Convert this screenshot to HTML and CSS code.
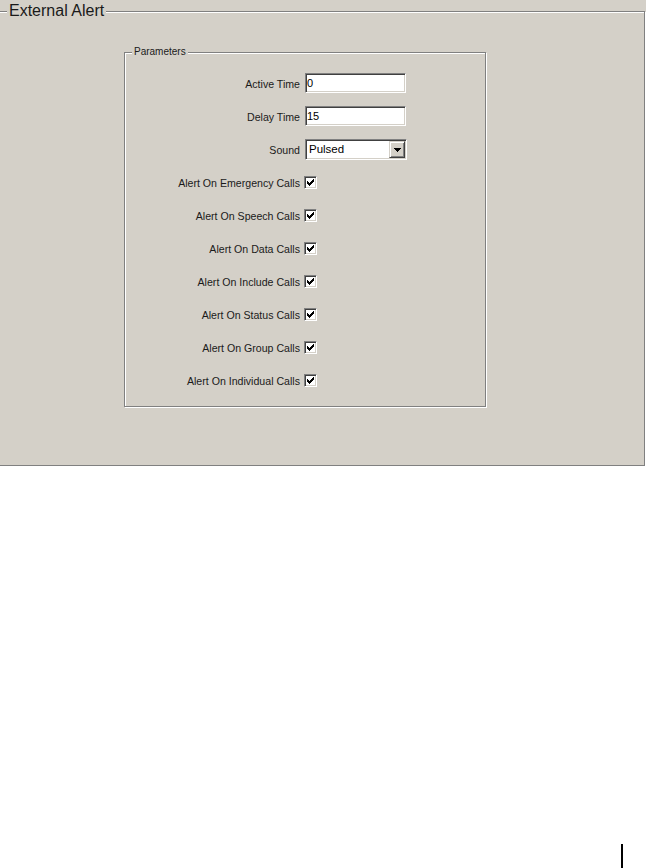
FILE: index.html
```html
<!DOCTYPE html>
<html lang="en">

<head>
    <meta charset="UTF-8">
    <meta name="viewport" content="width=device-width, initial-scale=1.0">
    <title>External Alert</title>
    <link rel="stylesheet" href="styles.css">
</head>

<body>
    <div class="panel">
        <fieldset class="group group-outer">
            <legend>External Alert</legend>

            <fieldset class="group group-params">
                <legend>Parameters</legend>

                <div class="form-grid">
                    <label for="active-time">Active Time</label>
                    <input type="text" id="active-time" value="0">

                    <label for="delay-time">Delay Time</label>
                    <input type="text" id="delay-time" value="15">

                    <label for="sound">Sound</label>
                    <div class="combo" id="sound">
                        <span class="combo-value">Pulsed</span>
                        <span class="combo-btn">
                            <svg width="7" height="4" viewBox="0 0 7 4"><path d="M0 0h7v1h-1v1h-1v1h-1v1h-1v-1h-1v-1h-1v-1h-1z" fill="#000"/></svg>
                        </span>
                    </div>

                    <label>Alert On Emergency Calls</label>
                    <span class="check"><svg width="11" height="11" viewBox="0 0 11 11"><path d="M2 4h1v3h-1zM3 5h1v3h-1zM4 6h1v3h-1zM5 5h1v3h-1zM6 4h1v3h-1zM7 3h1v3h-1zM8 2h1v3h-1z" fill="#000"/></svg></span>

                    <label>Alert On Speech Calls</label>
                    <span class="check"><svg width="11" height="11" viewBox="0 0 11 11"><path d="M2 4h1v3h-1zM3 5h1v3h-1zM4 6h1v3h-1zM5 5h1v3h-1zM6 4h1v3h-1zM7 3h1v3h-1zM8 2h1v3h-1z" fill="#000"/></svg></span>

                    <label>Alert On Data Calls</label>
                    <span class="check"><svg width="11" height="11" viewBox="0 0 11 11"><path d="M2 4h1v3h-1zM3 5h1v3h-1zM4 6h1v3h-1zM5 5h1v3h-1zM6 4h1v3h-1zM7 3h1v3h-1zM8 2h1v3h-1z" fill="#000"/></svg></span>

                    <label>Alert On Include Calls</label>
                    <span class="check"><svg width="11" height="11" viewBox="0 0 11 11"><path d="M2 4h1v3h-1zM3 5h1v3h-1zM4 6h1v3h-1zM5 5h1v3h-1zM6 4h1v3h-1zM7 3h1v3h-1zM8 2h1v3h-1z" fill="#000"/></svg></span>

                    <label>Alert On Status Calls</label>
                    <span class="check"><svg width="11" height="11" viewBox="0 0 11 11"><path d="M2 4h1v3h-1zM3 5h1v3h-1zM4 6h1v3h-1zM5 5h1v3h-1zM6 4h1v3h-1zM7 3h1v3h-1zM8 2h1v3h-1z" fill="#000"/></svg></span>

                    <label>Alert On Group Calls</label>
                    <span class="check"><svg width="11" height="11" viewBox="0 0 11 11"><path d="M2 4h1v3h-1zM3 5h1v3h-1zM4 6h1v3h-1zM5 5h1v3h-1zM6 4h1v3h-1zM7 3h1v3h-1zM8 2h1v3h-1z" fill="#000"/></svg></span>

                    <label>Alert On Individual Calls</label>
                    <span class="check"><svg width="11" height="11" viewBox="0 0 11 11"><path d="M2 4h1v3h-1zM3 5h1v3h-1zM4 6h1v3h-1zM5 5h1v3h-1zM6 4h1v3h-1zM7 3h1v3h-1zM8 2h1v3h-1z" fill="#000"/></svg></span>
                </div>
            </fieldset>
        </fieldset>
    </div>

    <div class="page-mark"></div>
</body>

</html>
```

FILE: styles.css
```css
* {
    margin: 0;
    padding: 0;
    box-sizing: border-box;
}

body {
    background-color: #fff;
    font-family: "Liberation Sans", Arial, sans-serif;
    color: #000;
}

.panel {
    width: 646px;
    background-color: #d4d0c8;
}

/* etched group box: dark line with a white line beside it */
.group {
    border: 1px solid #808080;
    box-shadow: inset 1px 1px 0 #fff, 1px 1px 0 #fff;
}

.group legend {
    background-color: #d4d0c8;
    padding: 0 2px;
    color: #1a1a1a;
}

.group-outer {
    margin-left: -3px;
    width: 648px;
    height: 466px;
    padding: 0 0 0 9px;
}

.group-outer > legend {
    font-size: 16px;
    line-height: 22px;
}

.group-params {
    margin: 24px 0 0 117px;
    width: 362px;
    padding: 0 0 15px 7px;
}

.group-params > legend {
    font-size: 10px;
    line-height: 12px;
}

.form-grid {
    display: grid;
    grid-template-columns: 168px 102px;
    grid-auto-rows: 21px;
    row-gap: 12px;
    column-gap: 5px;
    align-items: center;
    margin-top: 15px;
}

label {
    font-size: 10.6px;
    text-align: right;
    color: #1a1a1a;
}

input,
.combo,
.check {
    border: 1px solid;
    border-color: #808080 #fff #fff #808080;
    box-shadow: inset 1px 1px 0 #404040, inset -1px -1px 0 #d4d0c8;
    background-color: #fff;
}

input {
    align-self: start;
    width: 101px;
    height: 20px;
    padding: 0 2px 0 1px;
    font-family: "Liberation Sans", Arial, sans-serif;
    font-size: 11px;
    color: #000;
    outline: none;
}

.combo {
    display: flex;
    width: 102px;
    height: 21px;
    padding: 1px;
}

.combo-value {
    flex: 1;
    font-size: 11.5px;
    line-height: 17px;
    padding-left: 2px;
}

.combo-btn {
    width: 16px;
    height: 17px;
    display: flex;
    align-items: center;
    justify-content: center;
    background-color: #d4d0c8;
    border: 1px solid;
    border-color: #d4d0c8 #404040 #404040 #d4d0c8;
    box-shadow: inset 1px 1px 0 #fff, inset -1px -1px 0 #808080;
}

.check {
    width: 13px;
    height: 13px;
    margin-left: -1px;
    display: flex;
}

svg {
    display: block;
    shape-rendering: crispEdges;
}

.page-mark {
    width: 2px;
    height: 24px;
    margin: 378px 0 0 621px;
    background-color: #000;
}
```
